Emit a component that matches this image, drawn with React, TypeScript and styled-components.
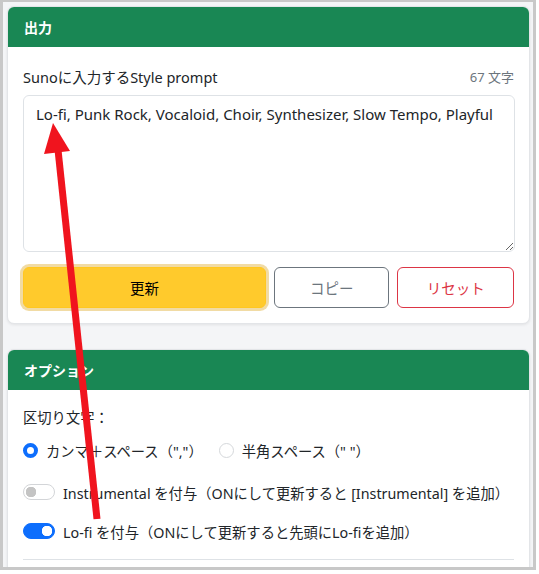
import React from "react";
import styled, { createGlobalStyle } from "styled-components";

const Global = createGlobalStyle`
  html, body { margin: 0; padding: 0; background: #ffffff; }
  * { box-sizing: border-box; }
  body { font-family: "Noto Sans", "Noto Sans CJK JP", sans-serif; color: #212529; }
`;

const Frame = styled.div`
  position: relative;
  width: 536px;
  height: 570px;
  border-style: solid;
  border-color: #c8c8c8;
  border-width: 2px 3px 3px 3px;
  background: #f4f5f7;
  overflow: hidden;
  padding: 4px 3px 0 4px;
  display: flex;
  flex-direction: column;
  gap: 25px;
`;

const Card = styled.section`
  background: #ffffff;
  border: 1px solid #e3e5e8;
  border-radius: 7px;
  box-shadow: 0 1px 3px rgba(0, 0, 0, 0.08);
  overflow: hidden;
  flex-shrink: 0;
`;

const CardHeader = styled.header`
  height: 40px;
  background: #198754;
  color: #ffffff;
  font-weight: 700;
  font-size: 14px;
  display: flex;
  align-items: center;
  padding-left: 16px;
`;

const CardBody = styled.div<{ $pt: number }>`
  padding: ${(p) => p.$pt}px 15px 15px 15px;
  display: flex;
  flex-direction: column;
`;

const LabelRow = styled.div`
  display: flex;
  justify-content: space-between;
  align-items: center;
  font-size: 14.5px;
  height: 20px;
  margin-bottom: 9px;
`;

const Counter = styled.span`
  color: #6c757d;
  font-size: 13px;
`;

const TextArea = styled.textarea`
  width: 492px;
  height: 157px;
  border: 1px solid #dee2e6;
  border-radius: 6px;
  padding: 7px 12px;
  font-family: "Noto Sans", "Noto Sans CJK JP", sans-serif;
  font-size: 15px;
  line-height: 1.5;
  color: #212529;
  resize: vertical;
  outline: none;
`;

const ButtonRow = styled.div`
  display: grid;
  grid-template-columns: 244fr 116fr 117fr;
  gap: 8px;
  margin-top: 15px;
`;

const Button = styled.button<{ $variant: "warning" | "secondary" | "danger" }>`
  height: 41px;
  border-radius: 6px;
  font-family: "Noto Sans", "Noto Sans CJK JP", sans-serif;
  font-size: 14.5px;
  cursor: pointer;
  background: ${(p) => (p.$variant === "warning" ? "#ffca2c" : "#ffffff")};
  border: 1px solid
    ${(p) =>
      p.$variant === "warning" ? "#ffc720" : p.$variant === "secondary" ? "#6c757d" : "#dc3545"};
  color: ${(p) =>
    p.$variant === "warning" ? "#000000" : p.$variant === "secondary" ? "#6c757d" : "#dc3545"};
  box-shadow: ${(p) => (p.$variant === "warning" ? "0 0 0 3px rgba(230, 190, 90, 0.55)" : "none")};
`;

const FieldLabel = styled.div`
  font-size: 14.3px;
  height: 20px;
  display: flex;
  align-items: center;
  margin-bottom: 14px;
`;

const RadioGroup = styled.div`
  display: flex;
  gap: 16px;
  align-items: center;
  height: 20px;
  margin-bottom: 22px;
`;

const RadioLabel = styled.label`
  display: flex;
  align-items: center;
  gap: 8px;
  font-size: 14.3px;
`;

const Radio = styled.input`
  appearance: none;
  margin: 0;
  width: 15px;
  height: 15px;
  border-radius: 50%;
  border: 1px solid #d5d8db;
  background: #fff;
  &:checked {
    border: 4px solid #0d6efd;
    background: #fff;
  }
`;

const SwitchRow = styled.label<{ $mb: number }>`
  display: flex;
  align-items: center;
  gap: 8px;
  font-size: 14.3px;
  height: 20px;
  margin-bottom: ${(p) => p.$mb}px;
`;

const Switch = styled.input`
  appearance: none;
  margin: 0;
  width: 32px;
  height: 16px;
  border-radius: 8px;
  border: 1px solid #d3d5d8;
  background: #fff radial-gradient(circle at 7px 50%, #c4c4c4 5px, transparent 5.5px);
  &:checked {
    border-color: #0d6efd;
    background: #0d6efd radial-gradient(circle at 23px 50%, #ffffff 5px, transparent 5.5px);
  }
`;

const Divider = styled.hr`
  margin: 0;
  border: none;
  border-top: 1px solid #dee2e6;
`;

const Overlay = styled.svg`
  position: absolute;
  left: -3px;
  top: -2px;
  width: 539px;
  height: 574px;
  pointer-events: none;
`;

export default function App() {
  const text = "Lo-fi, Punk Rock, Vocaloid, Choir, Synthesizer, Slow Tempo, Playful";
  return (
    <>
      <Global />
      <Frame>
        <Card>
          <CardHeader>出力</CardHeader>
          <CardBody $pt={19}>
            <LabelRow>
              <span>Sunoに入力するStyle prompt</span>
              <Counter>{text.length} 文字</Counter>
            </LabelRow>
            <TextArea defaultValue={text} />
            <ButtonRow>
              <Button $variant="warning">更新</Button>
              <Button $variant="secondary">コピー</Button>
              <Button $variant="danger">リセット</Button>
            </ButtonRow>
          </CardBody>
        </Card>
        <Card>
          <CardHeader>オプション</CardHeader>
          <CardBody $pt={16}>
            <FieldLabel>区切り文字：</FieldLabel>
            <RadioGroup>
              <RadioLabel>
                <Radio type="radio" name="sep" defaultChecked />
                カンマ＋スペース（","）
              </RadioLabel>
              <RadioLabel>
                <Radio type="radio" name="sep" />
                半角スペース（" "）
              </RadioLabel>
            </RadioGroup>
            <SwitchRow $mb={19}>
              <Switch type="checkbox" />
              Instrumental を付与（ONにして更新すると [Instrumental] を追加）
            </SwitchRow>
            <SwitchRow $mb={18}>
              <Switch type="checkbox" defaultChecked />
              Lo-fi を付与（ONにして更新すると先頭にLo-fiを追加）
            </SwitchRow>
            <Divider />
          </CardBody>
        </Card>
        <Overlay viewBox="0 0 539 574">
          <line x1="57.5" y1="145" x2="97" y2="519" stroke="#f0141e" strokeWidth="7" />
          <polygon points="53,123 44,154 70,151" fill="#f0141e" />
        </Overlay>
      </Frame>
    </>
  );
}
